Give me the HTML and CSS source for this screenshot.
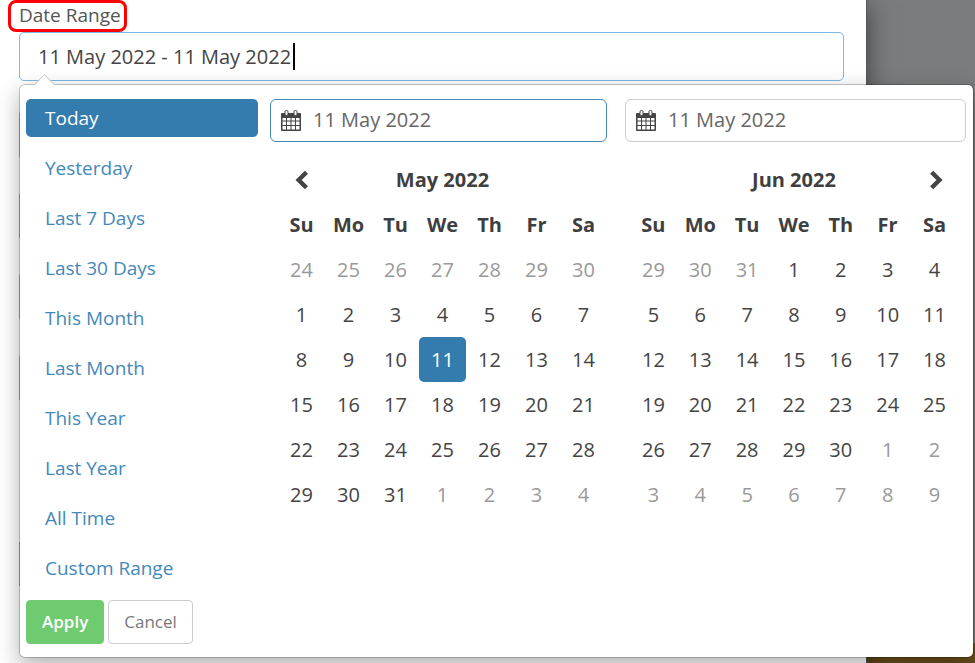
FILE: index.html
```html
<!DOCTYPE html>
<html lang="en">

<head>
    <meta charset="UTF-8">
    <meta name="viewport" content="width=device-width, initial-scale=1.0">
    <title>Date Range</title>
    <link rel="stylesheet" href="styles.css">
</head>

<body>
    <div class="modal">
        <label class="range-label" for="date-range">Date Range</label>
        <div class="range-field">
            <input type="text" id="date-range" class="range-input" value="11 May 2022 - 11 May 2022">
            <span class="caret"></span>

            <div class="daterangepicker">
                <div class="picker-body">
                    <ul class="ranges">
                        <li><button type="button" class="active">Today</button></li>
                        <li><button type="button">Yesterday</button></li>
                        <li><button type="button">Last 7 Days</button></li>
                        <li><button type="button">Last 30 Days</button></li>
                        <li><button type="button">This Month</button></li>
                        <li><button type="button">Last Month</button></li>
                        <li><button type="button">This Year</button></li>
                        <li><button type="button">Last Year</button></li>
                        <li><button type="button">All Time</button></li>
                        <li><button type="button">Custom Range</button></li>
                    </ul>

                    <div class="calendar left">
                        <div class="calendar-input active">
                            <svg class="icon-calendar" viewBox="0 0 20 21" aria-hidden="true">
                                <path fill="#444" fill-rule="evenodd" d="M1 3h18q1 0 1 1v16q0 1-1 1H1q-1 0-1-1V4q0-1 1-1zM1.500 8v2.500h3.500V8zM6 8v2.500h3.500V8zM10.500 8v2.500H14V8zM15 8v2.500h3.500V8zM1.500 11.500V15h3.500v-3.500zM6 11.500V15h3.500v-3.500zM10.500 11.500V15H14v-3.500zM15 11.500V15h3.500v-3.500zM1.500 16v3.500h3.500V16zM6 16v3.500h3.500V16zM10.500 16v3.500H14V16zM15 16v3.500h3.500V16z" />
                                <rect x="4" y="0.500" width="3" height="5" rx="1.200" fill="#fff" stroke="#444" />
                                <rect x="13" y="0.500" width="3" height="5" rx="1.200" fill="#fff" stroke="#444" />
                            </svg>
                            <input type="text" aria-label="Start date" value="11 May 2022">
                        </div>
                        <table>
                            <thead>
                                <tr>
                                    <th>
                                        <button type="button" class="nav" aria-label="Previous month">
                                            <svg viewBox="0 0 14 18"><path d="M11 2L4 9l7 7" /></svg>
                                        </button>
                                    </th>
                                    <th colspan="5">May 2022</th>
                                    <th></th>
                                </tr>
                                <tr><th>Su</th><th>Mo</th><th>Tu</th><th>We</th><th>Th</th><th>Fr</th><th>Sa</th></tr>
                            </thead>
                            <tbody>
                                <tr><td class="off">24</td><td class="off">25</td><td class="off">26</td><td class="off">27</td><td class="off">28</td><td class="off">29</td><td class="off">30</td></tr>
                                <tr><td>1</td><td>2</td><td>3</td><td>4</td><td>5</td><td>6</td><td>7</td></tr>
                                <tr><td>8</td><td>9</td><td>10</td><td class="selected">11</td><td>12</td><td>13</td><td>14</td></tr>
                                <tr><td>15</td><td>16</td><td>17</td><td>18</td><td>19</td><td>20</td><td>21</td></tr>
                                <tr><td>22</td><td>23</td><td>24</td><td>25</td><td>26</td><td>27</td><td>28</td></tr>
                                <tr><td>29</td><td>30</td><td>31</td><td class="off">1</td><td class="off">2</td><td class="off">3</td><td class="off">4</td></tr>
                            </tbody>
                        </table>
                    </div>

                    <div class="calendar right">
                        <div class="calendar-input">
                            <svg class="icon-calendar" viewBox="0 0 20 21" aria-hidden="true">
                                <path fill="#444" fill-rule="evenodd" d="M1 3h18q1 0 1 1v16q0 1-1 1H1q-1 0-1-1V4q0-1 1-1zM1.500 8v2.500h3.500V8zM6 8v2.500h3.500V8zM10.500 8v2.500H14V8zM15 8v2.500h3.500V8zM1.500 11.500V15h3.500v-3.500zM6 11.500V15h3.500v-3.500zM10.500 11.500V15H14v-3.500zM15 11.500V15h3.500v-3.500zM1.500 16v3.500h3.500V16zM6 16v3.500h3.500V16zM10.500 16v3.500H14V16zM15 16v3.500h3.500V16z" />
                                <rect x="4" y="0.500" width="3" height="5" rx="1.200" fill="#fff" stroke="#444" />
                                <rect x="13" y="0.500" width="3" height="5" rx="1.200" fill="#fff" stroke="#444" />
                            </svg>
                            <input type="text" aria-label="End date" value="11 May 2022">
                        </div>
                        <table>
                            <thead>
                                <tr>
                                    <th></th>
                                    <th colspan="5">Jun 2022</th>
                                    <th>
                                        <button type="button" class="nav" aria-label="Next month">
                                            <svg viewBox="0 0 14 18"><path d="M4 2l7 7-7 7" /></svg>
                                        </button>
                                    </th>
                                </tr>
                                <tr><th>Su</th><th>Mo</th><th>Tu</th><th>We</th><th>Th</th><th>Fr</th><th>Sa</th></tr>
                            </thead>
                            <tbody>
                                <tr><td class="off">29</td><td class="off">30</td><td class="off">31</td><td>1</td><td>2</td><td>3</td><td>4</td></tr>
                                <tr><td>5</td><td>6</td><td>7</td><td>8</td><td>9</td><td>10</td><td>11</td></tr>
                                <tr><td>12</td><td>13</td><td>14</td><td>15</td><td>16</td><td>17</td><td>18</td></tr>
                                <tr><td>19</td><td>20</td><td>21</td><td>22</td><td>23</td><td>24</td><td>25</td></tr>
                                <tr><td>26</td><td>27</td><td>28</td><td>29</td><td>30</td><td class="off">1</td><td class="off">2</td></tr>
                                <tr><td class="off">3</td><td class="off">4</td><td class="off">5</td><td class="off">6</td><td class="off">7</td><td class="off">8</td><td class="off">9</td></tr>
                            </tbody>
                        </table>
                    </div>
                </div>

                <div class="picker-buttons">
                    <button type="button" class="btn btn-apply">Apply</button>
                    <button type="button" class="btn btn-cancel">Cancel</button>
                </div>
            </div>
        </div>

        <!-- rest of the form, sits under the open picker -->
        <div class="form-rest">
            <div class="field"></div>
            <div class="field"></div>
            <div class="field"></div>
            <div class="field"></div>
            <div class="field last"></div>
        </div>
    </div>
</body>

</html>
```

FILE: styles.css
```css
* {
    box-sizing: border-box;
}

body {
    margin: 0;
    min-height: 100vh;
    overflow: hidden;
    font-family: "Open Sans", sans-serif;
    font-size: 20px;
    color: #444;
    background: linear-gradient(to top, #6b501c 20px, #7b7c7e 20px);
}

button,
input {
    font-family: inherit;
    font-size: inherit;
    color: inherit;
}

.modal {
    min-height: 100vh;
    margin-right: 108px;
    padding: 2px 22px 0 19px;
    background: #fff;
    border-right: 1px solid #555;
    box-shadow: 0 5px 24px rgba(0, 0, 0, 0.5);
}

.range-label {
    position: relative;
    display: block;
    width: max-content;
    height: 30px;
    font-size: 19px;
    line-height: 26px;
    color: #555;
}

/* red highlight around the label */
.range-label::before {
    content: "";
    position: absolute;
    top: -2px;
    left: -11px;
    right: -6px;
    bottom: 0;
    border: 3px solid #fe0000;
    border-radius: 8px;
}

.range-field {
    position: relative;
}

.range-input {
    display: block;
    width: 100%;
    height: 49px;
    padding: 0 18px;
    border: 1px solid #7ab8ea;
    border-radius: 5px;
    background: #fff;
    outline: none;
}

.caret {
    position: absolute;
    top: 11px;
    left: 274px;
    width: 2px;
    height: 27px;
    background: #000;
}

.form-rest {
    padding-top: 32px;
}

.field {
    height: 44px;
    margin-bottom: 37px;
    border: 1px solid #bbb;
}

.field.last {
    margin-top: 142px;
    margin-bottom: 0;
}

.daterangepicker {
    position: absolute;
    top: 52px;
    left: 0;
    right: -130px;
    z-index: 10;
    padding: 14px 7px 13px 6px;
    border: 1px solid rgba(0, 0, 0, 0.2);
    border-radius: 6px;
    background: #fff;
    background-clip: padding-box;
    box-shadow: 0 8px 22px rgba(0, 0, 0, 0.3);
}

.daterangepicker::before {
    content: "";
    position: absolute;
    top: -8px;
    left: 17px;
    width: 14px;
    height: 14px;
    border: 1px solid #ccc;
    border-right: 0;
    border-bottom: 0;
    background: linear-gradient(135deg, #fff 60%, transparent 60%);
    transform: rotate(45deg);
}

.picker-body {
    display: flex;
}

.ranges {
    display: flex;
    flex-direction: column;
    flex: 0 0 232px;
    gap: 12px;
    margin: 0 12px 0 0;
    padding: 0;
    list-style: none;
}

.ranges li {
    height: 38px;
}

.ranges button {
    width: 100%;
    height: 38px;
    padding: 0 19px;
    border: 0;
    border-radius: 5px;
    background: none;
    font-size: 19px;
    text-align: left;
    color: #4489b9;
    cursor: pointer;
}

.ranges .active {
    background: #357cae;
    color: #fff;
    font-weight: 500;
}

.calendar {
    flex: 1 1 0;
}

.calendar.left {
    margin-right: 18px;
}

.calendar.right {
    flex-basis: 4px;
}

.calendar-input {
    display: flex;
    align-items: center;
    height: 43px;
    margin-bottom: 15px;
    padding: 0 10px;
    border: 1px solid #ccc;
    border-radius: 6px;
    color: #666;
}

.calendar-input.active {
    border-color: #4489b9;
}

.calendar-input input {
    flex: 1;
    min-width: 0;
    height: 40px;
    padding: 0 12px 2px;
    border: 0;
    background: none;
    outline: none;
}

.icon-calendar {
    width: 20px;
    height: 21px;
}

.calendar table {
    width: 100%;
    table-layout: fixed;
    border-collapse: separate;
    border-spacing: 0;
}

/* room either side of the day grid */
.calendar.left table {
    margin-left: 8px;
    width: calc(100% - 8px);
}

.calendar.right table {
    margin-left: 5px;
    width: calc(100% - 13px);
}

.calendar th,
.calendar td {
    height: 45px;
    padding: 0;
    text-align: center;
    vertical-align: middle;
}

.calendar th {
    font-weight: 700;
    color: #3f3f3f;
}

.calendar .off {
    color: #999;
}

.calendar .selected {
    border-radius: 5px;
    background: #357cae;
    color: #fff;
    font-weight: 500;
}

.nav {
    display: block;
    margin: 0 auto;
    padding: 0;
    border: 0;
    background: none;
    cursor: pointer;
}

.nav svg {
    display: block;
    width: 16px;
    height: 20px;
    fill: none;
    stroke: #444;
    stroke-width: 4;
}

.picker-buttons {
    display: flex;
    gap: 4px;
    margin-top: 13px;
}

.btn {
    height: 44px;
    padding: 0 15px;
    border: 1px solid #ccc;
    border-radius: 4px;
    background: #fff;
    font-size: 17px;
    line-height: 22px;
    color: #777;
    cursor: pointer;
}

.btn-apply {
    border-color: #6ecb70;
    background: #6ecb70;
    color: #fff;
    font-weight: 600;
}
```
